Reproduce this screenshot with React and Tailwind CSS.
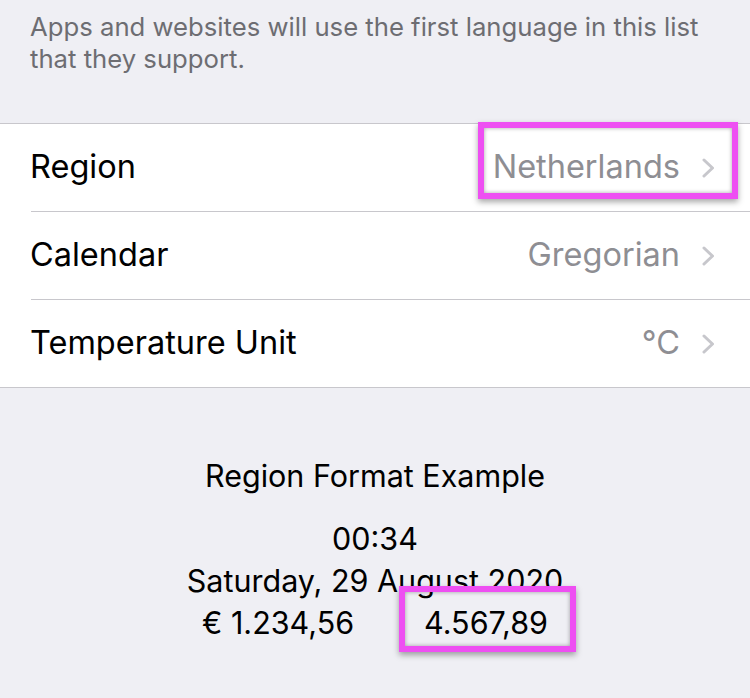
import React from "react";

function Chevron() {
  return (
    <svg width="13" height="20" viewBox="0 0 13 20" className="shrink-0">
      <polyline points="2,2 10.5,10 2,18" fill="none" stroke="#c7c7cc" strokeWidth="3" strokeLinecap="round" strokeLinejoin="round" />
    </svg>
  );
}

function Row({ label, value, last, highlight }) {
  return (
    <div className="relative h-[88px] bg-white">
      <div className="flex h-[87px] items-center pl-[30px] pr-[35px]">
        <span className="flex-1 text-[32.5px] text-black">{label}</span>
        <span className="text-[32.5px] text-[#8e8e93]">{value}</span>
        <span className="ml-[22px] flex items-center"><Chevron /></span>
      </div>
      <div className={last ? "h-px bg-[#c8c7cc]" : "ml-[31px] h-px bg-[#c8c7cc]"} />
      {highlight && (
        <div className="pointer-events-none absolute left-[478px] top-[-2px] h-[77px] w-[260px] border-[6px] border-[#ee4ff2] shadow-[0_3px_6px_rgba(0,0,0,0.35),inset_0_0_4px_rgba(0,0,0,0.35)]" />
      )}
    </div>
  );
}

export default function App() {
  return (
    <div className="h-[698px] w-[750px] overflow-hidden bg-[#efeff4] font-['Inter',sans-serif]">
      <div className="h-[123px] pl-[30px] pr-[20px] pt-[11px] text-[25.7px] leading-[32px] text-[#6d6d72]">
        Apps and websites will use the first language in this list that they support.
      </div>
      <div className="h-px bg-[#c8c7cc]" />
      <Row label="Region" value="Netherlands" highlight />
      <Row label="Calendar" value="Gregorian" />
      <Row label="Temperature Unit" value="°C" last />
      <div className="flex flex-col items-center pt-[70px] text-[30.5px] text-black">
        <div className="leading-[36px]">Region Format Example</div>
        <div className="mt-[24px] leading-[42px]">00:34</div>
        <div className="leading-[42px]">Saturday, 29 August 2020</div>
        <div className="flex gap-[70px] leading-[42px]">
          <span>€ 1.234,56</span>
          <span className="relative">
            4.567,89
            <span className="pointer-events-none absolute left-[-25px] top-[-16px] h-[66px] w-[177px] border-[6px] border-[#ee4ff2] shadow-[0_3px_6px_rgba(0,0,0,0.35),inset_0_0_4px_rgba(0,0,0,0.35)]" />
          </span>
        </div>
      </div>
    </div>
  );
}
